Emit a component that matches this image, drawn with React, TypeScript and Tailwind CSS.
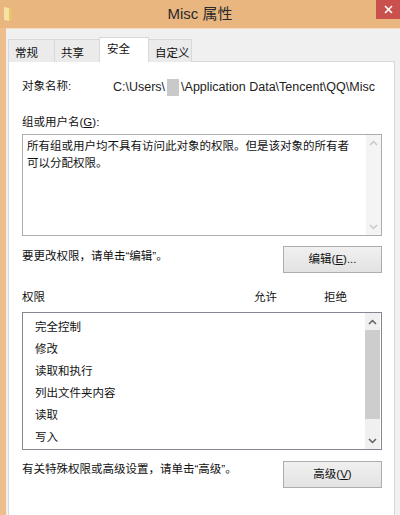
const ui = { fontFamily: '"Liberation Sans", "Noto Sans CJK SC", sans-serif' };

const perms = ["完全控制", "修改", "读取和执行", "列出文件夹内容", "读取", "写入"];

function Chevron({ up, color }: { up?: boolean; color: string }) {
  return (
    <svg width="9" height="6" viewBox="0 0 9 6">
      <path
        d={up ? "M1 5 L4.5 1.5 L8 5" : "M1 1 L4.5 4.5 L8 1"}
        fill="none"
        stroke={color}
        strokeWidth="1.5"
      />
    </svg>
  );
}

function Tab({ label, active, w }: { label: string; active?: boolean; w: string }) {
  return active ? (
    <div
      className={`${w} -mx-[1px] z-10 flex h-[25px] items-start border border-b-0 border-[#d9d9d9] bg-white pl-[7px] pt-[3px] text-[11.5px] text-[#111]`}
    >
      {label}
    </div>
  ) : (
    <div
      className={`${w} flex h-[23px] items-start border border-b-0 border-r-0 border-[#d9d9d9] bg-[#ebebeb] pl-[6px] pt-[5px] text-[11.5px] text-[#111] last:border-r`}
    >
      {label}
    </div>
  );
}

export default function App() {
  return (
    <div className="h-[515px] w-[400px] overflow-hidden bg-[#eebf8d]" style={ui}>
      {/* 标题栏 */}
      <div className="relative flex h-[28px] items-center justify-center bg-[#e9b67f]">
        <svg className="absolute left-[3px] top-[6px]" width="11" height="16" viewBox="0 0 11 16">
          <path d="M1 1 L6 2 L6 15 L1 14 Z" fill="#f6e3a4" />
          <path d="M6 2 L9 3 L9 14 L6 15 Z" fill="#e9c56a" />
        </svg>
        <span className="text-[15px] text-[#2a2a2a]">Misc 属性</span>
        <div className="absolute right-0 top-0 flex h-[19px] w-[24px] items-center justify-center bg-[#c9504d]">
          <svg width="9" height="9" viewBox="0 0 9 9">
            <path d="M1 1 L8 8 M8 1 L1 8" stroke="#fff" strokeWidth="1.6" />
          </svg>
        </div>
      </div>

      <div className="ml-[6px] h-full border-t border-[#f6dcc0] bg-[#f0f0f0] pl-[2px] pr-[5px] pt-[8px]">
        {/* 选项卡 */}
        <div className="flex h-[25px] items-end">
          <Tab label="常规" w="w-[46px]" />
          <Tab label="共享" w="w-[46px]" />
          <Tab label="安全" w="w-[50px]" active />
          <Tab label="自定义" w="w-[44px]" />
        </div>

        {/* 安全页 */}
        <div className="-mt-[1px] h-[470px] border border-[#d9d9d9] bg-white pl-[13px] pr-[12px] text-[11.5px] text-[#111]">
          <div className="mt-[16px] flex h-[18px] items-center">
            <span className="w-[91px]">对象名称:</span>
            <span className="flex items-center text-[12.5px] text-[#222]">
              C:\Users\
              <span className="mx-[2px] inline-block h-[17px] w-[12px] bg-[#c9c9c9]" />
              \Application Data\Tencent\QQ\Misc
            </span>
          </div>

          <div className="mt-[18px] h-[16px] leading-[16px]">
            组或用户名(<span className="underline">G</span>):
          </div>

          <div className="mt-[4px] flex h-[102px] border border-[#abadb3]">
            <div className="flex-1 pl-[4px] pt-[3px] leading-[17px]">
              所有组或用户均不具有访问此对象的权限。但是该对象的所有者
              <br />
              可以分配权限。
            </div>
            <div className="flex w-[15px] flex-col items-center justify-between bg-[#f4f4f4] py-[5px]">
              <Chevron up color="#c8c8c8" />
              <Chevron color="#c8c8c8" />
            </div>
          </div>

          <div className="mt-[10px] flex items-start justify-between">
            <span className="pt-[2px]">要更改权限，请单击“编辑”。</span>
            <button className="h-[27px] w-[99px] border border-[#adadad] bg-gradient-to-b from-[#f0f0f0] to-[#e3e3e3] text-[11.5px] text-[#111]">
              编辑(<span className="underline">E</span>)...
            </button>
          </div>

          <div className="mt-[17px] flex h-[16px] items-center">
            <span className="w-[232px]">权限</span>
            <span className="w-[70px]">允许</span>
            <span>拒绝</span>
          </div>

          <div className="mt-[6px] flex h-[138px] border border-[#828790]">
            <div className="flex-1 pl-[12px] pt-[4px]">
              {perms.map((p) => (
                <div key={p} className="flex h-[22px] items-center">
                  {p}
                </div>
              ))}
            </div>
            <div className="mr-[1px] flex w-[15px] flex-col bg-[#f0f0f0]">
              <div className="flex h-[17px] items-center justify-center">
                <Chevron up color="#606060" />
              </div>
              <div className="h-[89px] bg-[#cdcdcd]" />
              <div className="flex-1" />
              <div className="flex h-[17px] items-center justify-center">
                <Chevron color="#606060" />
              </div>
            </div>
          </div>

          <div className="mt-[11px] flex items-start justify-between">
            <span>有关特殊权限或高级设置，请单击“高级”。</span>
            <button className="h-[27px] w-[99px] border border-[#adadad] bg-gradient-to-b from-[#f0f0f0] to-[#e3e3e3] text-[11.5px] text-[#111]">
              高级(<span className="underline">V</span>)
            </button>
          </div>
        </div>
      </div>
    </div>
  );
}
